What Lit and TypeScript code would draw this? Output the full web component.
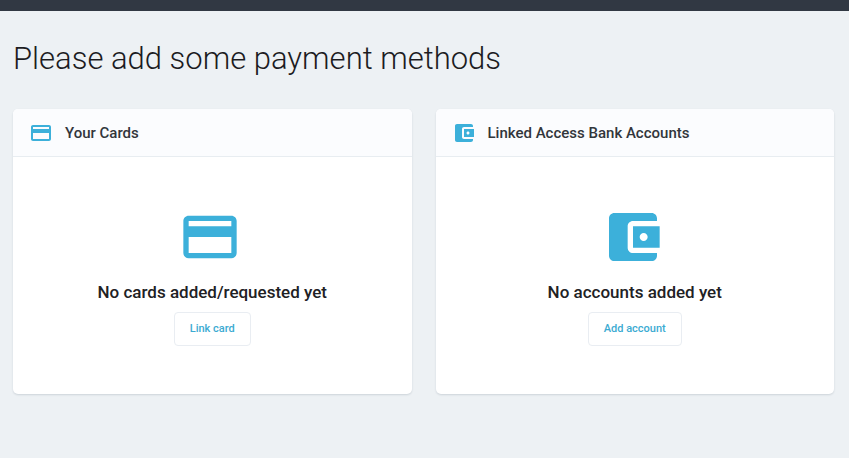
import { LitElement, html, css, svg } from "lit";
import { customElement, property } from "lit/decorators.js";

const icons = {
  card: svg`<path d="M20 4H4c-1.11 0-1.99.89-1.99 2L2 18c0 1.11.89 2 2 2h16c1.11 0 2-.89 2-2V6c0-1.11-.89-2-2-2zm0 14H4v-6h16v6zm0-10H4V6h16v2z"/>`,
  wallet: svg`<path d="M21 18v1c0 1.1-.9 2-2 2H5c-1.11 0-2-.9-2-2V5c0-1.1.89-2 2-2h14c1.1 0 2 .9 2 2v1h-9c-1.11 0-2 .9-2 2v8c0 1.1.89 2 2 2h9zm-9-2h10V8H12v8zm4-2.5c-.83 0-1.5-.67-1.5-1.5s.67-1.5 1.5-1.5 1.5.67 1.5 1.5-.67 1.5-1.5 1.5z"/>`,
};

@customElement("method-panel")
export class MethodPanel extends LitElement {
  @property() icon: keyof typeof icons = "card";
  @property() heading = "";
  @property() message = "";
  @property() action = "";

  static styles = css`
    :host {
      display: block;
      background: #fff;
      border-radius: 5px;
      box-shadow: 0 1px 2px rgba(40, 60, 80, 0.16);
      overflow: hidden;
    }
    .head {
      display: flex;
      align-items: center;
      gap: 12px;
      padding: 12px 16px 11px;
      background: #fbfcfe;
      border-bottom: 1px solid #e8edf1;
    }
    .title {
      margin: 0;
      font-size: 15px;
      line-height: 24px;
      font-weight: 500;
      color: #32363b;
    }
    .icon {
      display: block;
      fill: #3cb0da;
      flex: none;
    }
    .small {
      width: 24px;
      height: 24px;
    }
    .large {
      width: 64px;
      height: 64px;
      margin-right: 4px;
    }
    .body {
      display: flex;
      flex-direction: column;
      align-items: center;
      padding: 48px 16px;
    }
    .message {
      margin: 11px 0 8px;
      font-size: 17px;
      line-height: 24px;
      font-weight: 500;
      color: #212124;
      text-align: center;
    }
    .action {
      height: 34px;
      padding: 0 15px;
      border: 1px solid #e9edf2;
      border-radius: 4px;
      background: #fff;
      font: 500 11px/18px Roboto, sans-serif;
      color: #3cabd2;
      cursor: pointer;
    }
  `;

  render() {
    return html`
      <header class="head">
        <svg class="icon small" viewBox="0 0 24 24" aria-hidden="true">${icons[this.icon]}</svg>
        <h2 class="title">${this.heading}</h2>
      </header>
      <div class="body">
        <svg class="icon large" viewBox="0 0 24 24" aria-hidden="true">${icons[this.icon]}</svg>
        <p class="message">${this.message}</p>
        <button class="action" type="button">${this.action}</button>
      </div>
    `;
  }
}

@customElement("app-root")
export class AppRoot extends LitElement {
  static styles = css`
    :host {
      display: block;
      min-height: 100vh;
      background: #edf1f4;
      font-family: Roboto, sans-serif;
    }
    .bar {
      height: 11px;
      background: #313843;
    }
    .page {
      padding: 24px 15px 64px 13px;
    }
    .heading {
      margin: 0 0 26px;
      font-size: 31px;
      line-height: 48px;
      font-weight: 300;
      color: #1c1c1f;
    }
    .panels {
      display: grid;
      grid-template-columns: repeat(2, minmax(0, 1fr));
      gap: 24px;
    }
  `;

  render() {
    return html`
      <div class="bar"></div>
      <main class="page">
        <h1 class="heading">Please add some payment methods</h1>
        <div class="panels">
          <method-panel
            icon="card"
            heading="Your Cards"
            message="No cards added/requested yet"
            action="Link card"
          ></method-panel>
          <method-panel
            icon="wallet"
            heading="Linked Access Bank Accounts"
            message="No accounts added yet"
            action="Add account"
          ></method-panel>
        </div>
      </main>
    `;
  }
}
